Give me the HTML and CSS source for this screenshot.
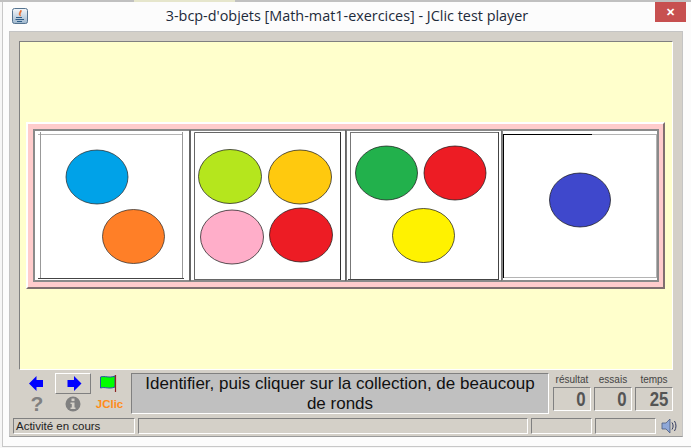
FILE: index.html
```html
<!DOCTYPE html>
<html lang="fr">

<head>
  <meta charset="UTF-8">
  <title>3-bcp-d'objets [Math-mat1-exercices] - JClic test player</title>
  <link rel="stylesheet" href="styles.css">
</head>

<body>

  <div class="screen-edge"></div>

  <div class="window">
    <div class="titlebar">
      <svg class="java-icon" width="16" height="16" viewBox="0 0 16 16">
        <defs>
          <linearGradient id="cup" x1="0" y1="0" x2="0" y2="1">
            <stop offset="0" stop-color="#f4f7fa" />
            <stop offset="1" stop-color="#9db6cd" />
          </linearGradient>
        </defs>
        <rect x="0.5" y="0.5" width="15" height="15" rx="2" fill="url(#cup)" stroke="#55738f" />
        <path d="M9 2 C10.500 4 7 5 8.500 8 C6 6.500 7.500 4 9 2 Z" fill="#e8692a" stroke="#e8692a" stroke-width="0.600" />
        <path d="M4 9.500 H10 M3.500 11.500 H12 M5 13.500 H10" stroke="#2f5d87" fill="none" />
      </svg>
      <div class="title">3-bcp-d'objets [Math-mat1-exercices] - JClic test player</div>
      <div class="close">&#x2715;</div>
    </div>

    <div class="frame">
      <div class="stage">
        <div class="board">
          <div class="cells">
            <svg class="cell" viewBox="34 130 156 151">
              <path d="M38 134.500 H183" stroke="#b4b4b4" />
              <path d="M40.500 132 V279 M182.500 132 V279" stroke="#999" />
              <path d="M38 278.500 H184" stroke="#444" />
              <path d="M189.500 130 V281" stroke="#666" />
              <ellipse cx="97" cy="177" rx="31" ry="27" fill="#00a2e8" stroke="#222" stroke-width="0.700" />
              <ellipse cx="133.500" cy="236.500" rx="31" ry="27" fill="#ff7f27" stroke="#222" stroke-width="0.700" />
            </svg>
            <svg class="cell" viewBox="190 130 156 151">
              <path d="M190.500 130 V281 M345.500 130 V281" stroke="#666" />
              <path d="M194.500 132.500 H341 M194.500 132.500 V280 M194 279.500 H341" stroke="#666" />
              <path d="M340.500 132 V280" stroke="#333" />
              <ellipse cx="230" cy="176.500" rx="31.500" ry="27" fill="#b5e61d" stroke="#111" stroke-width="0.700" />
              <ellipse cx="300" cy="177" rx="31.500" ry="27" fill="#ffc90e" stroke="#111" stroke-width="0.700" />
              <ellipse cx="232" cy="237" rx="31.500" ry="27" fill="#ffaec9" stroke="#111" stroke-width="0.700" />
              <ellipse cx="301" cy="235" rx="31.500" ry="27" fill="#ed1c24" stroke="#111" stroke-width="0.700" />
            </svg>
            <svg class="cell" viewBox="346 130 156 151">
              <path d="M346.500 130 V281 M501.500 130 V281" stroke="#777" />
              <path d="M350.500 132.500 H498 M350.500 132 V280" stroke="#777" />
              <path d="M348 279.500 H498 M498.500 132 V280" stroke="#444" />
              <ellipse cx="386.500" cy="173" rx="31" ry="27" fill="#22b14c" stroke="#111" stroke-width="0.700" />
              <ellipse cx="455" cy="173" rx="31" ry="27" fill="#ed1c24" stroke="#111" stroke-width="0.700" />
              <ellipse cx="423.500" cy="235.500" rx="31" ry="27" fill="#fff200" stroke="#111" stroke-width="0.700" />
            </svg>
            <svg class="cell" viewBox="502 130 156 151">
              <path d="M502.500 130 V281" stroke="#888" />
              <path d="M592 134.500 H657 M503 277.500 H657 M656.500 134 V278" stroke="#b4b4b4" />
              <path d="M503 134.500 H592 M503.500 134 V278" stroke="#000" />
              <ellipse cx="580" cy="200" rx="30.500" ry="27" fill="#3f48cc" stroke="#111" stroke-width="0.700" />
            </svg>
          </div>
        </div>
      </div>

      <div class="controls">
        <div class="tools">
          <button class="tool tool-back">
            <svg width="15" height="15" viewBox="0 0 15 15"><path d="M0 7.500 L7.500 0 V4 H14 V11 H7.500 V15 Z" fill="#0000ff" /></svg>
          </button>
          <button class="tool tool-raised">
            <svg width="15" height="15" viewBox="0 0 15 15"><path d="M14.500 7.500 L7 0 V4 H0.500 V11 H7 V15 Z" fill="#0000ff" /></svg>
          </button>
          <button class="tool tool-flag">
            <svg width="17" height="18" viewBox="0 0 17 18">
              <path d="M0.500 2 C5 0.500 9 3.500 15 1 V12 C9 14.500 5 11.500 0.500 13 Z" fill="#00ff00" stroke="#2a4fa8" />
              <path d="M15.500 0 V17" stroke="#8a2222" stroke-width="1.200" />
            </svg>
          </button>
          <div class="tool help">?</div>
          <div class="tool">
            <svg width="16" height="16" viewBox="0 0 16 16">
              <circle cx="8" cy="8" r="7.500" fill="#808080" />
              <rect x="6.500" y="2.500" width="3" height="2.600" fill="#d4d0c8" />
              <path d="M5.500 6.500 H9.500 V11.500 H10.500 V13 H5.500 V11.500 H6.800 V8 H5.500 Z" fill="#d4d0c8" />
            </svg>
          </div>
          <div class="tool brand">JClic</div>
        </div>

        <div class="message">Identifier, puis cliquer sur la collection, de beaucoup de ronds</div>

        <div class="counters">
          <div class="counter">
            <span class="counter-label">résultat</span>
            <span class="counter-value"><span class="digits">0</span></span>
          </div>
          <div class="counter">
            <span class="counter-label">essais</span>
            <span class="counter-value"><span class="digits">0</span></span>
          </div>
          <div class="counter">
            <span class="counter-label">temps</span>
            <span class="counter-value"><span class="digits">25</span></span>
          </div>
        </div>
      </div>

      <div class="statusbar">
        <div class="status status-main">Activité en cours</div>
        <div class="status status-wide"></div>
        <div class="status status-small"></div>
        <div class="status status-small"></div>
        <svg class="sound" width="19" height="16" viewBox="0 0 19 16">
          <path d="M2 5 H6 L10 1 V15 L6 11 H2 Z" fill="#8fa8d8" stroke="#4a5a80" stroke-width="0.800" />
          <path d="M12 4.500 C13.500 6.500 13.500 9.500 12 11.500 M14.500 3 C16.500 6 16.500 10 14.500 13" fill="none" stroke="#333a60" />
        </svg>
      </div>
    </div>
  </div>

</body>

</html>
```

FILE: styles.css
```css
html,
body {
  margin: 0;
  padding: 0;
}

body {
  width: 691px;
  height: 448px;
  overflow: hidden;
  background: #f6f6f6;
  font-family: "Liberation Sans", Arial, sans-serif;
}

.screen-edge {
  height: 2px;
  background: linear-gradient(to right, #c0c0c0 134px, #e6e6cc 134px, #e6e6cc 235px, #c0c0c0 235px);
}

.window {
  box-sizing: border-box;
  width: 689px;
  height: 445px;
  margin-left: 2px;
  padding: 0 5px 7px 6px;
  background: #fcfcfc;
  border-left: 1px solid #c8c8c8;
  border-bottom: 1px solid #c8c8c8;
}

.titlebar {
  display: flex;
  align-items: flex-start;
  height: 29px;
}

.java-icon {
  margin: 6px 0 0 3px;
}

.title {
  flex: 1;
  margin-top: 4px;
  padding-left: 11px;
  text-align: center;
  font-family: "Open Sans", sans-serif;
  font-size: 14.400px;
  color: #1c2a3a;
}

.close {
  width: 31px;
  height: 20px;
  background: #c75050;
  color: white;
  font-size: 11px;
  font-weight: bold;
  line-height: 20px;
  text-align: center;
}

.frame {
  box-sizing: border-box;
  width: 674px;
  height: 406px;
  padding: 9px 9px 0 9px;
  background: #d4d0c8;
  border: 1px solid #c4c4c4;
  border-bottom: 1px solid #9a9a9a;
}

.stage {
  box-sizing: border-box;
  display: flex;
  align-items: center;
  justify-content: center;
  height: 329px;
  padding-right: 1px;
  background: #ffffcc;
  border-top: 1px solid #808080;
  border-left: 1px solid #808080;
  border-bottom: 1px solid #fff;
  border-right: 1px solid #fff;
}

.board {
  box-sizing: border-box;
  width: 639px;
  height: 167px;
  padding: 6px 5px 6px 6px;
  background: #ffcccc;
  border-top: 2px solid #fff;
  border-left: 2px solid #fff;
  border-right: 2px solid #7f6f6f;
  border-bottom: 2px solid #7f6f6f;
}

.cells {
  display: flex;
  width: 624px;
  height: 151px;
  background: #fff;
  box-shadow: 0 0 0 1px #8a8a8a, inset 0 0 0 1px #8a8a8a;
}

.cell {
  display: block;
  width: 156px;
  height: 151px;
}

.controls {
  display: flex;
  align-items: flex-start;
  margin-top: 3px;
}

.tools {
  display: grid;
  grid-template-columns: 36px 36px 36px;
  grid-template-rows: 21px 20px;
  width: 112px;
}

.tool {
  display: flex;
  align-items: center;
  justify-content: center;
  padding: 0;
  background: none;
  border: none;
}

.tool-back {
  padding-right: 2px;
}

.tool-raised {
  box-sizing: border-box;
  padding-left: 3px;
  border-top: 1px solid #fff;
  border-left: 1px solid #fff;
  border-right: 1px solid #808080;
  border-bottom: 1px solid #808080;
}

.tool-flag {
  padding-right: 2px;
}

.help {
  color: #808080;
  font-size: 21px;
  font-weight: bold;
}

.brand {
  padding-left: 1px;
  color: #ff8c1a;
  font-size: 11.500px;
  font-weight: bold;
}

.message {
  box-sizing: border-box;
  width: 418px;
  height: 41px;
  padding: 0 8px;
  background: #c0c0c0;
  border-top: 1px solid #808080;
  border-left: 1px solid #808080;
  border-right: 1px solid #fff;
  border-bottom: 1px solid #fff;
  color: #111;
  font-size: 17px;
  line-height: 20px;
  text-align: center;
}

.counters {
  display: flex;
  gap: 3px;
  margin-left: 4px;
}

.counter {
  display: flex;
  flex-direction: column;
  align-items: center;
  width: 38px;
}

.counter-label {
  height: 14px;
  color: #444;
  font-size: 10px;
  line-height: 14px;
}

.counter-value {
  box-sizing: border-box;
  width: 100%;
  height: 24px;
  padding-right: 4px;
  border-top: 1px solid #808080;
  border-left: 1px solid #808080;
  border-right: 1px solid #fff;
  border-bottom: 1px solid #fff;
  color: #555;
  font-size: 21px;
  font-weight: bold;
  line-height: 22px;
  text-align: right;
}

.digits {
  display: inline-block;
  transform: scaleX(0.8);
  transform-origin: right;
}

.statusbar {
  display: flex;
  align-items: center;
  gap: 3px;
  margin: 4px -6px 0 -6px;
}

.status {
  box-sizing: border-box;
  height: 16px;
  border-top: 1px solid #808080;
  border-left: 1px solid #808080;
  border-right: 1px solid #fff;
  border-bottom: 1px solid #fff;
  color: #222;
  font-size: 11.500px;
  line-height: 14px;
  padding-left: 2px;
}

.status-main {
  width: 122px;
}

.status-wide {
  width: 391px;
}

.status-small {
  width: 61px;
}

.sound {
  margin-left: 1px;
}
```
